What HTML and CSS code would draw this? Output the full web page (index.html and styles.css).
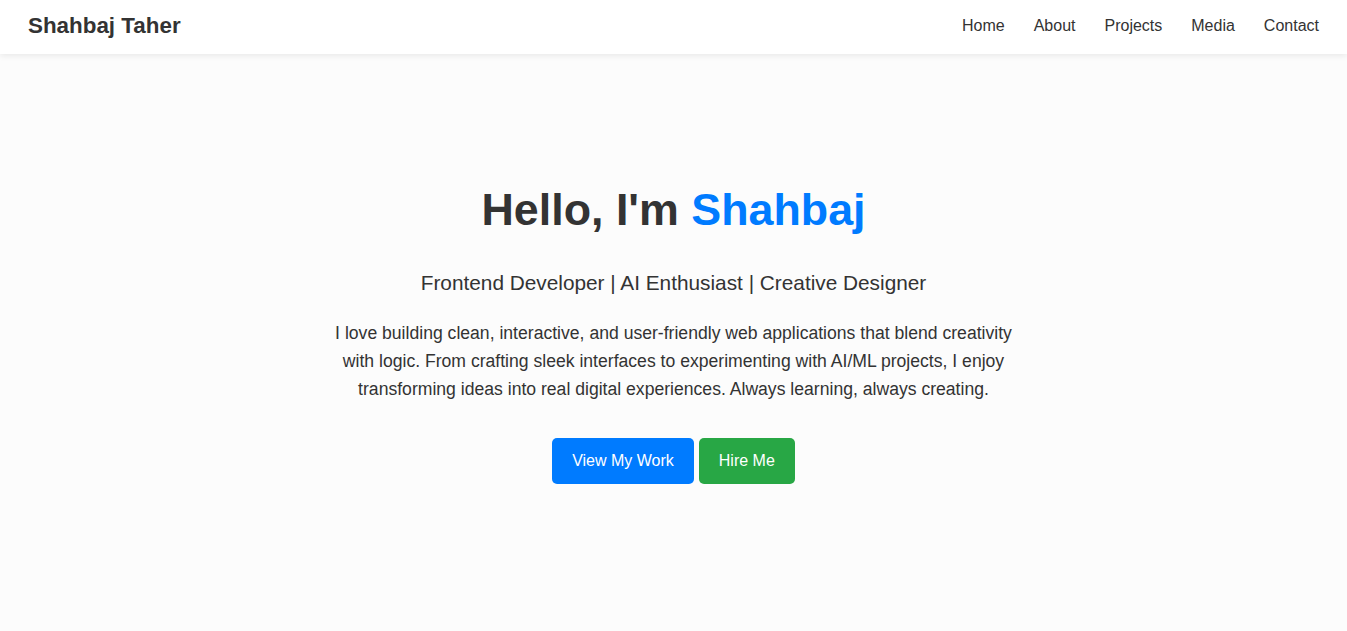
FILE: index.html
```html
<!DOCTYPE html>
<html lang="en">
<head>
<meta charset="utf-8">
<title>Shahbaj Taher</title>
<link rel="stylesheet" href="styles.css">
</head>
<body>
<header class="navbar">
  <div class="logo">Shahbaj Taher</div>
  <nav class="nav-links">
    <a href="#">Home</a>
    <a href="#">About</a>
    <a href="#">Projects</a>
    <a href="#">Media</a>
    <a href="#">Contact</a>
  </nav>
</header>
<main class="hero">
  <h1 class="hero-title">Hello, I'm <span class="accent">Shahbaj</span></h1>
  <h2 class="hero-subtitle">Frontend Developer | AI Enthusiast | Creative Designer</h2>
  <p class="hero-text">I love building clean, interactive, and user-friendly web applications that blend creativity with logic. From crafting sleek interfaces to experimenting with AI/ML projects, I enjoy transforming ideas into real digital experiences. Always learning, always creating.</p>
  <div class="hero-buttons">
    <a href="#" class="btn btn-primary">View My Work</a>
    <a href="#" class="btn btn-success">Hire Me</a>
  </div>
</main>
</body>
</html>
```
FILE: styles.css
```css
* { box-sizing: border-box; }
html, body {
  margin: 0;
  padding: 0;
  height: 100%;
}
body {
  font-family: "Liberation Sans", Arial, sans-serif;
  background: #fcfcfc;
  color: #333;
}
.navbar {
  height: 54px;
  background: #fff;
  display: flex;
  align-items: center;
  justify-content: space-between;
  padding: 0 28px 3px;
  box-shadow: 0 2px 6px rgba(0,0,0,0.08);
  position: relative;
  z-index: 1;
}
.logo {
  font-size: 22.4px;
  font-weight: bold;
  color: #333;
}
.nav-links {
  display: flex;
  gap: 29px;
}
.nav-links a {
  text-decoration: none;
  color: #333;
  font-size: 16px;
}
.hero {
  text-align: center;
  padding: 130px 20px 0;
}
.hero-title {
  font-size: 44.8px;
  font-weight: bold;
  margin: 0 0 36px;
  color: #333;
}
.accent { color: #007bff; }
.hero-subtitle {
  font-size: 20.8px;
  font-weight: normal;
  margin: 0 0 24px;
  color: #333;
}
.hero-text {
  font-size: 17.6px;
  line-height: 1.6;
  max-width: 700px;
  margin: 0 auto 35px;
  color: #333;
}
.hero-buttons {
  display: flex;
  justify-content: center;
  gap: 5px;
}
.btn {
  display: inline-block;
  padding: 14px 20px;
  font-size: 16px;
  line-height: 18px;
  color: #fff;
  text-decoration: none;
  border-radius: 5px;
}
.btn-primary { background: #007bff; }
.btn-success { background: #28a745; }
```
